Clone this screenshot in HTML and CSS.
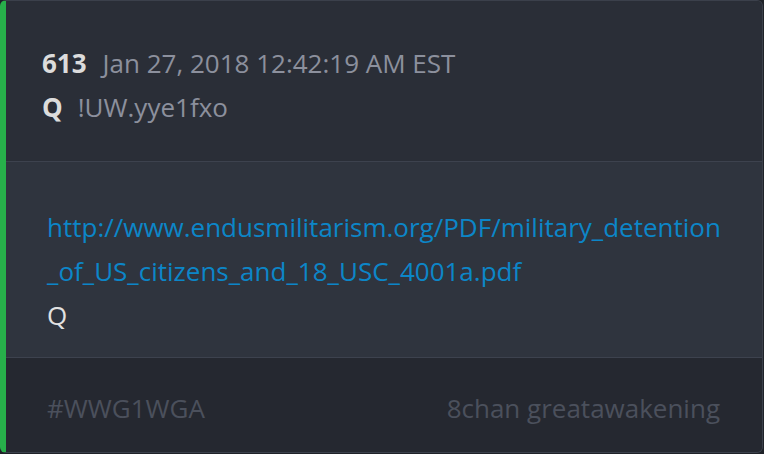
FILE: index.html
```html
<!DOCTYPE html>
<html>
<head>
<meta charset="utf-8">
<link rel="stylesheet" href="styles.css">
</head>
<body>
<div class="card">
  <div class="head">
    <div class="row"><span class="num">613</span><span class="date">Jan 27, 2018 12:42:19 AM EST</span></div>
    <div class="row"><span class="num">Q</span><span class="date">!UW.yye1fxo</span></div>
  </div>
  <div class="body">
    <a class="link" href="#">http://www.endusmilitarism.org/PDF/military_detention<wbr>_of_US_citizens_and_18_USC_4001a.pdf</a>
    <div class="q">Q</div>
  </div>
  <div class="foot">
    <span>#WWG1WGA</span>
    <span>8chan greatawakening</span>
  </div>
</div>
</body>
</html>
```
FILE: styles.css
```css
html, body { margin: 0; padding: 0; background: #1f2228; }
body { width: 764px; height: 454px; font-family: "Open Sans", sans-serif; }
.card {
  box-sizing: border-box;
  width: 763px;
  height: 453px;
  border: 1px solid #3b404b;
  border-left: 6px solid #27b04a;
  border-radius: 6px;
  overflow: hidden;
  display: flex;
  flex-direction: column;
  background: #2a2e37;
}
.head {
  height: 161px;
  box-sizing: border-box;
  padding: 40px 0 0 36px;
  background: #2a2e37;
  border-bottom: 1px solid #3d424e;
}
.row { font-size: 26px; line-height: 44px; display: flex; gap: 16px; }
.row + .row { gap: 15px; }
.num { color: #dcdcdc; font-weight: 700; }
.date { color: #8c909d; }
.body {
  height: 196px;
  box-sizing: border-box;
  padding: 43px 30px 0 41px;
  background: #2f343e;
  border-bottom: 1px solid #3d424e;
  font-size: 26px;
  line-height: 44px;
}
.link { color: #0c86c8; text-decoration: none; word-break: break-all; }
.q { color: #e2e2e2; }
.foot {
  flex: 1;
  background: #252830;
  display: flex;
  justify-content: space-between;
  padding: 32px 42px 0 41px;
  font-size: 26px;
  color: #4b505c;
}
```
